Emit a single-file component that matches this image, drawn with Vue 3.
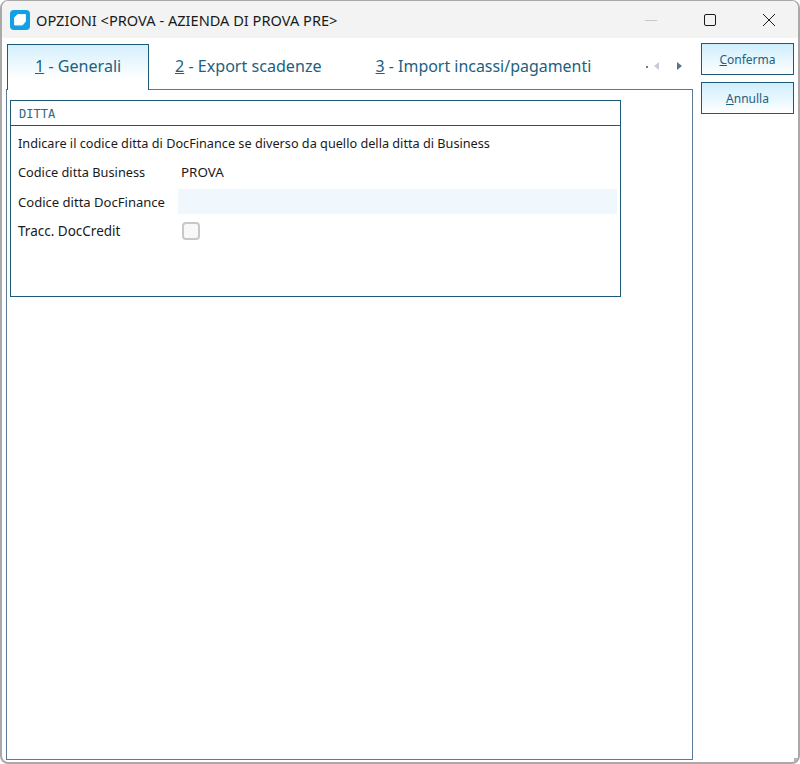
<script setup>
const tabs = [
  { key: '1', rest: ' - Generali', active: true },
  { key: '2', rest: ' - Export scadenze' },
  { key: '3', rest: ' - Import incassi/pagamenti' },
]
</script>

<template>
  <div class="window">
    <header class="titlebar">
      <svg class="logo" width="20" height="20" viewBox="0 0 20 20">
        <rect x="0" y="0" width="20" height="20" rx="4" fill="#12a0e2" />
        <path d="M7.5 4.5H15.5V11.5L12.5 15H4.5V7.5Z" fill="#fff" stroke="#e4f5fd" stroke-width="1" stroke-linejoin="round" />
      </svg>
      <span class="title">OPZIONI &lt;PROVA - AZIENDA DI PROVA PRE&gt;</span>
      <div class="controls">
        <svg width="12" height="12" viewBox="0 0 12 12"><path d="M0 6.5H12" stroke="#c8c8c8" /></svg>
        <svg width="12" height="12" viewBox="0 0 12 12"><rect x="0.5" y="0.5" width="11" height="11" rx="1.5" fill="none" stroke="#1a1a1a" /></svg>
        <svg width="12" height="12" viewBox="0 0 12 12"><path d="M0 0L12 12M12 0L0 12" stroke="#1a1a1a" fill="none" /></svg>
      </div>
    </header>
    <main class="body">
      <section class="left">
        <nav class="tabs">
          <div v-for="t in tabs" :key="t.key" class="tab" :class="{ active: t.active }"><u>{{ t.key }}</u>{{ t.rest }}</div>
          <div class="arrows">
            <span class="dot"></span>
            <span class="arrow back"></span>
            <span class="arrow fwd"></span>
          </div>
        </nav>
        <div class="pane">
          <fieldset class="group">
            <div class="legend">DITTA</div>
            <div class="content">
              <p class="hint">Indicare il codice ditta di DocFinance se diverso da quello della ditta di Business</p>
              <div class="row r1"><label>Codice ditta Business</label><span class="val">PROVA</span></div>
              <div class="row r2"><label>Codice ditta DocFinance</label><div class="input"></div></div>
              <div class="row r3"><label>Tracc. DocCredit</label><span class="check"></span></div>
            </div>
          </fieldset>
        </div>
      </section>
      <aside class="buttons">
        <button class="btn"><u>C</u>onferma</button>
        <button class="btn"><u>A</u>nnulla</button>
      </aside>
    </main>
    <span class="grip"></span>
  </div>
</template>

<style scoped>
.window {
  box-sizing: border-box;
  position: relative;
  width: 800px;
  height: 764px;
  background: #fff;
  border: 1px solid #a9a9a9;
  border-width: 1px 2px 2px 2px;
  border-radius: 8px;
  overflow: hidden;
  display: flex;
  flex-direction: column;
  font-family: "Noto Sans", "Open Sans", sans-serif;
  color: #1a1a1a;
}
.grip {
  position: absolute;
  right: 0;
  bottom: 0;
  width: 4px;
  height: 4px;
  background: #b4b4b4;
}
.titlebar {
  height: 37px;
  flex: none;
  background: #f3f3f3;
  display: flex;
  align-items: center;
  padding-left: 8px;
}
.logo { flex: none; }
.title { margin-left: 6px; font-size: 14.6px; }
.controls {
  margin-left: auto;
  margin-right: 23px;
  display: flex;
  align-items: center;
  gap: 47px;
}
.body {
  flex: 1;
  display: flex;
  min-height: 0;
}
.left {
  width: 687px;
  margin-left: 4px;
  display: flex;
  flex-direction: column;
  padding-top: 6px;
  padding-bottom: 2px;
}
.tabs {
  height: 46px;
  display: flex;
  align-items: flex-start;
  flex: none;
  position: relative;
  z-index: 1;
  margin-bottom: -1px;
  padding-left: 1px;
}
.tab {
  box-sizing: border-box;
  height: 46px;
  line-height: 44px;
  font-size: 16.1px;
  color: #1c617f;
  padding: 0 28px 0 26px;
  white-space: nowrap;
}
.tab:nth-child(3) { font-size: 15.95px; }
.tab.active {
  width: 142px;
  padding: 0 27px;
  background: linear-gradient(#d4effc, #fff 75%);
  border: 1px solid #1c5a78;
  border-bottom: none;
  line-height: 42px;
}
.arrows {
  margin-left: auto;
  margin-right: 11px;
  display: flex;
  align-items: center;
  height: 44px;
}
.dot { width: 2px; height: 2px; background: #6b7a90; margin-right: 6px; margin-top: 2px; }
.arrow { width: 0; height: 0; border: 4px solid transparent; }
.arrow.back { border-right: 5px solid #c6ccd6; border-left: none; margin-right: 18px; }
.arrow.fwd { border-left: 5px solid #5f7090; border-right: none; }
.pane {
  flex: 1;
  border: 1px solid #5a7a96;
  padding: 10px 0 0 3px;
}
.group {
  box-sizing: border-box;
  margin: 0;
  padding: 0;
  width: 611px;
  height: 197px;
  border: 1px solid #1c5a78;
  min-width: 0;
}
.legend {
  height: 24px;
  line-height: 26px;
  border-bottom: 1px solid #1c5a78;
  padding-left: 8px;
  font-family: "DejaVu Sans Mono", monospace;
  font-size: 12px;
  color: #2a6a88;
}
.content { padding: 8px 3px 0 7px; font-size: 12.75px; }
.hint { margin: 0; line-height: 18px; font-size: 12.7px; }
.row { display: flex; align-items: center; }
.row label { width: 160px; flex: none; white-space: nowrap; }
.r1 { margin-top: 11px; height: 18px; }
.r2 { margin-top: 8px; height: 25px; }
.r2 label { font-size: 13.05px; }
.r3 { margin-top: 4px; height: 25px; }
.r3 label { font-size: 13.5px; }
.val { padding-left: 3px; font-size: 13.4px; }
.input { flex: 1; height: 25px; background: #f0f8fe; }
.check {
  box-sizing: border-box;
  width: 18px;
  height: 18px;
  margin-left: 4px;
  border: 2px solid #c8c8c8;
  border-radius: 4px;
  background: #f8f8f8;
}
.buttons {
  margin-left: 8px;
  padding-top: 5px;
  display: flex;
  flex-direction: column;
  gap: 7px;
}
.btn {
  box-sizing: border-box;
  width: 93px;
  height: 32px;
  border: 1px solid #1c5a78;
  background: linear-gradient(#cfeefd, #fff);
  color: #1c617f;
  font-family: inherit;
  font-size: 12px;
  padding: 0;
}
</style>

<style>
html, body { margin: 0; background: #fff; }
</style>
